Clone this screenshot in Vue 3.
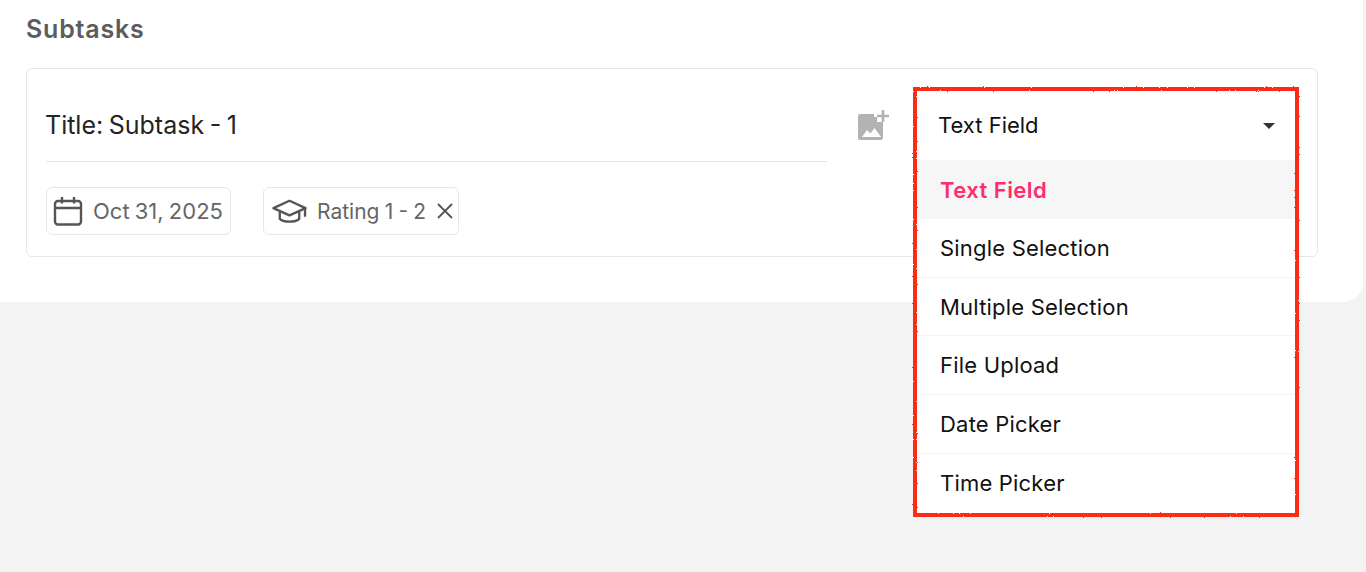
<script setup>
const options = ['Text Field', 'Single Selection', 'Multiple Selection', 'File Upload', 'Date Picker', 'Time Picker']
</script>

<template>
  <div class="page">
    <section class="panel">
      <h2 class="heading">Subtasks</h2>
      <div class="card">
        <div class="main">
          <div class="title">Title: Subtask - 1</div>
          <div class="chips">
            <div class="chip chip-date">
              <svg width="30" height="30" viewBox="0 0 30 30" fill="none" stroke="#555" stroke-width="2.400">
                <rect x="2" y="5" width="26" height="23.500" rx="3" />
                <path d="M2 12h26M9 1v6.500M21 1v6.500" />
              </svg>
              <span>Oct 31, 2025</span>
            </div>
            <div class="chip chip-rating">
              <svg width="35" height="28" viewBox="0 0 36 28" fill="none" stroke="#555" stroke-width="2.400" stroke-linejoin="round">
                <path d="M1.500 11 18 3.500l16.500 7.500L18 18.500z" />
                <path d="M8 15v7c3 4 17 4 20 0v-7M34 11v9" />
              </svg>
              <span>Rating 1 - 2</span>
              <svg class="close" width="18" height="18" viewBox="0 0 18 18" stroke="#555" stroke-width="1.800">
                <path d="M2 2l14 14M16 2 2 16" />
              </svg>
            </div>
          </div>
        </div>
        <svg class="image-add" width="32" height="32" viewBox="0 0 32 32">
          <path fill="#b3b3b3" d="M2 6h14v3h3v5h6v16a2 2 0 0 1-2 2H2a2 2 0 0 1-2-2V8a2 2 0 0 1 2-2z" />
          <path fill="#fff" d="M4 29l5-7 3.500 3.500 4-5.500 6.500 9z" />
          <path fill="none" stroke="#b3b3b3" stroke-width="2.600" d="M25 2v12M19 8h12" />
        </svg>
      </div>
    </section>

    <div class="dropdown">
      <div class="select">
        <span class="select-label">Text Field</span>
        <i class="caret"></i>
      </div>
      <ul class="menu">
        <li v-for="(o, i) in options" :key="o" :class="{ active: i === 0 }">{{ o }}</li>
      </ul>
    </div>

    <svg class="annotation" width="394" height="438" viewBox="0 0 394 438">
      <defs>
        <filter id="rough" x="-2%" y="-2%" width="104%" height="104%">
          <feTurbulence type="fractalNoise" baseFrequency="0.7" numOctaves="2" seed="4" />
          <feDisplacementMap in="SourceGraphic" scale="2" />
        </filter>
      </defs>
      <rect x="6" y="6" width="382" height="426" fill="none" stroke="#ff2a12" stroke-width="4" filter="url(#rough)" />
    </svg>
  </div>
</template>

<style>
html, body { margin: 0; background: #f3f3f3; }
</style>

<style scoped>
* { box-sizing: border-box; }
.page {
  position: relative;
  width: 1366px;
  height: 572px;
  overflow: hidden;
  background: #f3f3f3;
  font-family: Inter, "Noto Sans", sans-serif;
}
.panel {
  width: 1363px;
  height: 302px;
  padding: 0 45px 0 26px;
  background: #fff;
  border-bottom-right-radius: 20px;
}
.heading {
  margin: 0;
  padding-top: 15px;
  height: 68px;
  font-size: 25px;
  line-height: 28px;
  font-weight: 600;
  color: #5c5c5c;
  letter-spacing: .8px;
}
.card {
  position: relative;
  height: 189px;
  padding: 0 19px;
  border: 1px solid #e6e6e6;
  border-radius: 6px;
}
.main { width: 781px; }
.title {
  height: 93px;
  padding-top: 38px;
  font-size: 25px;
  line-height: 36px;
  color: #242424;
  word-spacing: -1.500px;
  text-indent: -1px;
  border-bottom: 1px solid #e3e3e3;
}
.chips {
  display: flex;
  gap: 32px;
  padding-top: 25px;
}
.chip {
  display: flex;
  align-items: center;
  height: 48px;
  border: 1px solid #e6e6e6;
  border-radius: 6px;
  color: #666;
}
.chip-date {
  width: 185px;
  padding-left: 6px;
  gap: 10px;
  font-size: 22px;
  word-spacing: -1px;
}
.chip-rating {
  width: 196px;
  padding-left: 8px;
  gap: 10px;
  font-size: 21px;
  word-spacing: -.7px;
}
.image-add {
  position: absolute;
  left: 831px;
  top: 39px;
}
.dropdown {
  position: absolute;
  left: 917px;
  top: 91px;
  width: 379px;
  height: 422px;
  background: #fff;
  box-shadow: 0 2px 8px rgba(0, 0, 0, .08);
}
.select {
  display: flex;
  align-items: center;
  justify-content: space-between;
  height: 69px;
  padding: 0 21px;
  font-size: 22px;
  color: #111;
}
.select-label { margin-top: -2px; }
.caret {
  width: 0;
  height: 0;
  border-left: 6px solid transparent;
  border-right: 6px solid transparent;
  border-top: 6px solid #333;
}
.menu {
  margin: 0;
  padding: 0;
  list-style: none;
}
.menu li {
  display: flex;
  align-items: center;
  height: 58.700px;
  padding-left: 23px;
  font-size: 22px;
  letter-spacing: .2px;
  color: #111;
  border-bottom: 1px solid #f4f4f4;
}
.menu li:last-child { border-bottom: 0; }
.menu li.active {
  height: 59px;
  background: #f6f6f6;
  color: #ff2d6b;
  font-weight: 600;
  letter-spacing: .45px;
  border-bottom: 0;
}
.annotation {
  position: absolute;
  left: 909px;
  top: 83px;
}
</style>
